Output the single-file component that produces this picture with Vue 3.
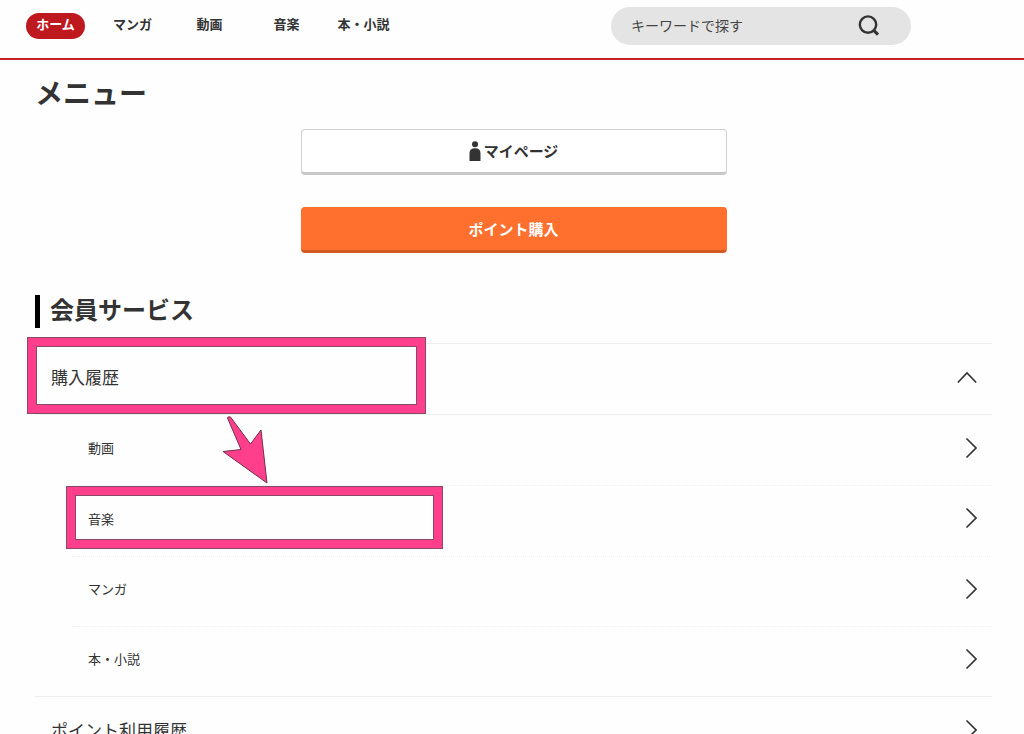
<script setup>
const tabs = ['ホーム', 'マンガ', '動画', '音楽', '本・小説']
const historyItems = [
  { label: '動画' },
  { label: '音楽', marked: true },
  { label: 'マンガ' },
  { label: '本・小説' },
]
</script>

<template>
  <div class="page">
    <header class="header">
      <nav class="tabs">
        <a v-for="(tab, i) in tabs" :key="tab" href="#" class="tab" :class="{ active: i === 0 }">
          <span class="tab-label">{{ tab }}</span>
        </a>
      </nav>
      <form class="search" role="search" @submit.prevent>
        <input class="search-input" type="text" placeholder="キーワードで探す" aria-label="キーワードで探す" />
        <button class="search-button" type="submit" aria-label="検索">
          <svg width="22" height="22" viewBox="0 0 22 22" fill="none" stroke="#333" stroke-width="2.4">
            <circle cx="10" cy="9.6" r="8.2" />
            <path d="M15 14.600L20 19.600" stroke-width="3" />
          </svg>
        </button>
      </form>
    </header>

    <main class="main">
      <h1 class="title">メニュー</h1>

      <div class="actions">
        <button class="action" type="button">
          <svg width="12" height="20" viewBox="0 0 12 20" fill="#333">
            <circle cx="6" cy="3.2" r="3" />
            <path d="M0.5 20V12Q0.5 7.2 6 7.2Q11.5 7.2 11.5 12V20Z" />
          </svg>
          <span class="action-label">マイページ</span>
        </button>
        <button class="action primary" type="button">
          <span class="action-label">ポイント購入</span>
        </button>
      </div>

      <section>
        <h2 class="section-title">会員サービス</h2>
        <ul class="list">
          <li class="group">
            <button class="row" type="button" aria-expanded="true">
              <span>購入履歴</span>
              <svg width="20" height="12" viewBox="0 0 20 12" fill="none" stroke="#333" stroke-width="1.6">
                <path d="M0.8 11.500L10 2L19.200 11.500" />
              </svg>
            </button>
            <span class="mark mark-group"></span>
            <svg class="arrow" width="46" height="70" viewBox="0 0 46 70">
              <path d="M5.5 4Q6 2 8.500 3L28.500 30L39 16L45 69L1 37.500L19 35.500Z" fill="#ff3f8c" stroke="#70304c" />
            </svg>
            <ul class="sublist">
              <li v-for="item in historyItems" :key="item.label" class="subitem">
                <a href="#" class="row subrow">
                  <span>{{ item.label }}</span>
                  <svg width="12" height="22" viewBox="0 0 12 22" fill="none" stroke="#333" stroke-width="1.6">
                    <path d="M1.500 1.5L11 11L1.500 20.500" />
                  </svg>
                </a>
                <span v-if="item.marked" class="mark mark-item"></span>
              </li>
            </ul>
          </li>
          <li class="group">
            <a href="#" class="row">
              <span>ポイント利用履歴</span>
              <svg width="12" height="22" viewBox="0 0 12 22" fill="none" stroke="#333" stroke-width="1.6">
                <path d="M1.500 1.5L11 11L1.500 20.500" />
              </svg>
            </a>
          </li>
        </ul>
      </section>
    </main>
  </div>
</template>

<style>
body {
  margin: 0;
  background: #fefefe;
}
</style>

<style scoped>
.page {
  color: #333;
  font-family: "Noto Sans CJK JP", sans-serif;
  font-size: 13px;
}

.page *,
.page {
  box-sizing: border-box;
}

a {
  color: inherit;
  text-decoration: none;
}

button,
input {
  font-family: inherit;
  color: inherit;
}

ul {
  list-style: none;
  margin: 0;
  padding: 0;
}

svg {
  display: block;
  flex: none;
}

.header {
  display: flex;
  justify-content: space-between;
  align-items: center;
  padding: 7px 113px 13px 17px;
  border-bottom: 2px solid #c8202a;
}

.tabs {
  display: grid;
  grid-template-columns: repeat(5, 77px);
}

.tab {
  display: flex;
  justify-content: center;
  font-weight: 700;
}

.tab-label {
  padding: 0 10px 4px;
  border-radius: 13px;
  line-height: 22px;
  white-space: nowrap;
}

.active .tab-label {
  background: #bf1920;
  color: #fff;
}

.search {
  display: flex;
  align-items: center;
  width: 300px;
  height: 38px;
  padding: 0 31px 0 20px;
  border-radius: 19px;
  background: #e4e4e4;
}

.search-input {
  flex: 1;
  min-width: 0;
  padding: 0 0 3px;
  border: 0;
  outline: 0;
  background: transparent;
  font-size: 14px;
}

.search-input::placeholder {
  color: #444;
  opacity: 1;
}

.search-button {
  padding: 0;
  border: 0;
  background: transparent;
}

.main {
  padding: 12px 32px 0 35px;
}

.title {
  margin: 0;
  padding-bottom: 2px;
  font-size: 28px;
  line-height: 40px;
}

.actions {
  display: flex;
  flex-direction: column;
  align-items: center;
  gap: 32px;
  margin-top: 15px;
}

.action {
  display: flex;
  justify-content: center;
  align-items: center;
  gap: 3px;
  width: 100%;
  max-width: 426px;
  height: 46px;
  border: 1px solid #d0d0d0;
  border-bottom: 3px solid #c8c8c8;
  border-radius: 4px;
  background: #fff;
  font-size: 15px;
  font-weight: 700;
}

.action-label {
  padding-bottom: 2px;
}

.primary {
  border-color: #ff6f2d #ff6f2d #d35a22;
  background: #ff6f2d;
  color: #fff;
}

.section-title {
  margin: 42px 0 15px;
  padding: 0 0 6px 10px;
  border-left: 5px solid #000;
  font-size: 24px;
  line-height: 27px;
}

.group {
  position: relative;
  border-top: 1px solid #eee;
}

.row {
  display: flex;
  justify-content: space-between;
  align-items: center;
  width: 100%;
  height: 70px;
  padding: 0 15px 5px 16px;
  border: 0;
  background: transparent;
  font-size: 17px;
  text-align: left;
}

.sublist {
  display: grid;
  grid-auto-rows: 1fr;
  min-height: 282px;
  border-top: 1px solid #eee;
}

.subitem {
  position: relative;
  margin-left: 37px;
}

.subitem + .subitem {
  border-top: 1px dotted #eee;
}

.subrow {
  height: 100%;
  font-size: 13px;
}

.mark {
  position: absolute;
  border: 8px solid #ff3f8c;
  outline: 1px solid #8a4a65;
  box-shadow: inset 0 0 0 1px #8a4a65;
  pointer-events: none;
}

.mark-group {
  top: -6px;
  left: -7px;
  width: 397px;
  height: 75px;
}

.mark-item {
  top: 1px;
  left: -5px;
  width: 375px;
  height: 61px;
}

.arrow {
  position: absolute;
  top: 70px;
  left: 187px;
}
</style>
